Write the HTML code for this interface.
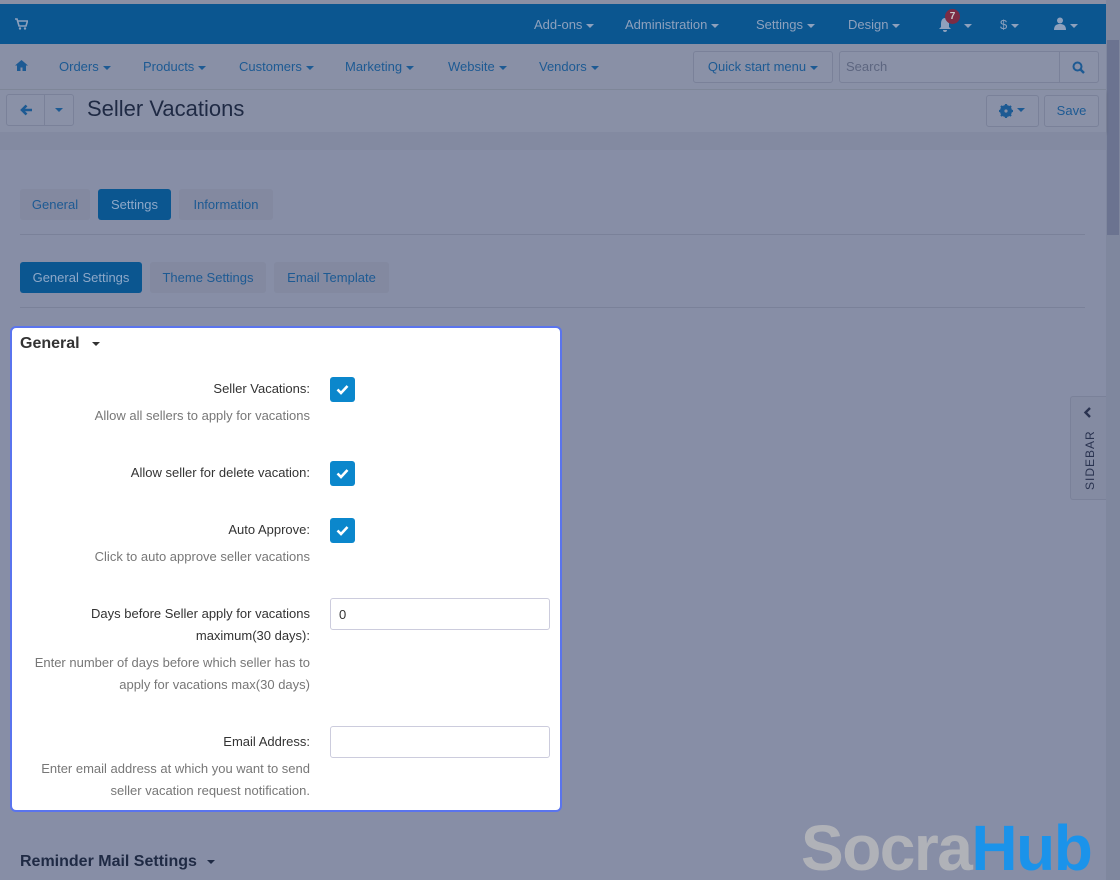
<!DOCTYPE html>
<html><head><meta charset="utf-8"><style>
*{box-sizing:border-box;margin:0;padding:0}
html,body{width:1120px;height:880px;overflow:hidden}
body{background:#878ea6;font-family:"Liberation Sans","DejaVu Sans",sans-serif;font-size:13px;color:#1f2a44;position:relative}
.top{position:absolute;left:0;top:4px;width:1106px;height:40px;background:#0b5690;color:#8ea1bd}
.top span{position:absolute;top:13px;font-size:13px}
.car{display:inline-block;width:0;height:0;border-left:4px solid transparent;border-right:4px solid transparent;border-top:4px solid currentColor;vertical-align:middle;margin-left:4px}
.nav2{position:absolute;left:0;top:44px;width:1106px;height:46px;background:#8990a6;border-bottom:1px solid #7f8799}
.nav2 span{position:absolute;top:15px;color:#1d5a93;font-size:13px}
.btn{position:absolute;border:1px solid #7a8199;border-radius:3px;background:#8a91a7}
.title{position:absolute;left:0;top:90px;width:1106px;height:42px;background:#8990a6;box-shadow:0 2px 3px rgba(0,0,0,.12)}
.tab{position:absolute;height:31px;border-radius:3px;background:#8389a0;color:#1d5a93;font-size:13px;text-align:center;line-height:31px}
.tab.a{background:#0b5690;color:#8ea8c8}
.hr{position:absolute;left:20px;width:1065px;height:1px;background:#7a8199}
.panel{position:absolute;left:10px;top:326px;width:552px;height:486px;background:#fff;border:2px solid #5a74ee;border-radius:6px}
.lbl{position:absolute;right:250px;text-align:right;color:#333;font-size:13px;line-height:22px;white-space:nowrap}
.hint{position:absolute;right:250px;text-align:right;color:#777;font-size:13px;line-height:22px;white-space:nowrap}
.cb{position:absolute;left:318px;width:25px;height:25px;background:#0b87cc;border-radius:3px}
.cb svg{position:absolute;left:6px;top:7px}
.inp{position:absolute;left:318px;width:220px;height:32px;border:1px solid #ccd;border-radius:3px;padding:8px;font-size:13px;color:#333}
</style></head><body>
<div style="position:absolute;left:0;top:0;width:1120px;height:4px;background:#8b90a4"></div>
<div style="position:absolute;left:1106px;top:0;width:14px;height:880px;background:#7f879e"></div>
<div style="position:absolute;left:1107px;top:40px;width:12px;height:195px;background:#6b7390"></div>
<div class="top">
<svg style="position:absolute;left:15px;top:14px" width="13" height="12" viewBox="0 0 13 12"><path d="M0 1h2l2 7h7l1.5-5H3" fill="none" stroke="#8ea1bd" stroke-width="1.6"/><circle cx="5" cy="10.5" r="1.2" fill="#8ea1bd"/><circle cx="10" cy="10.5" r="1.2" fill="#8ea1bd"/></svg>
<span style="left:534px">Add-ons<i class="car"></i></span>
<span style="left:625px">Administration<i class="car"></i></span>
<span style="left:756px">Settings<i class="car"></i></span>
<span style="left:848px">Design<i class="car"></i></span>
<svg style="position:absolute;left:938px;top:13px" width="14" height="15" viewBox="0 0 14 15"><path d="M7 1C4 1 3 4 3 7v3L1 12h12l-2-2V7c0-3-1-6-4-6zM5 13a2 2 0 004 0z" fill="#8ea1bd"/></svg>
<div style="position:absolute;left:945px;top:5px;width:15px;height:15px;border-radius:50%;background:#7b2c44;color:#ccc;font-size:10px;text-align:center;line-height:15px;font-weight:bold">7</div>
<span style="left:960px;top:13px"><i class="car"></i></span>
<span style="left:1000px">$<i class="car"></i></span>
<svg style="position:absolute;left:1054px;top:13px" width="12" height="13" viewBox="0 0 12 13"><circle cx="6" cy="3.5" r="3" fill="#8ea1bd"/><path d="M0 13c0-5 3-6 6-6s6 1 6 6z" fill="#8ea1bd"/></svg>
<span style="left:1066px"><i class="car"></i></span>
</div>
<div class="nav2">
<svg style="position:absolute;left:15px;top:16px" width="13" height="11" viewBox="0 0 13 11"><path d="M6.5 0L0 5.5h2V11h3.5V7.5h2V11H11V5.5h2z" fill="#1d5a93"/></svg>
<span style="left:59px">Orders<i class="car"></i></span>
<span style="left:143px">Products<i class="car"></i></span>
<span style="left:239px">Customers<i class="car"></i></span>
<span style="left:345px">Marketing<i class="car"></i></span>
<span style="left:448px">Website<i class="car"></i></span>
<span style="left:539px">Vendors<i class="car"></i></span>
<div class="btn" style="left:693px;top:7px;width:140px;height:32px;color:#1d5a93;text-align:center;line-height:30px">Quick start menu<i class="car"></i></div>
<div class="btn" style="left:839px;top:7px;width:260px;height:32px;color:#5d6680;padding-left:6px;line-height:30px">Search</div>
<div style="position:absolute;left:1059px;top:8px;width:1px;height:30px;background:#7a8199"></div>
<svg style="position:absolute;left:1072px;top:17px" width="13" height="13" viewBox="0 0 13 13"><circle cx="5.5" cy="5.5" r="4" fill="none" stroke="#1d5a93" stroke-width="2"/><path d="M8.5 8.5l3.5 3.5" stroke="#1d5a93" stroke-width="2.4"/></svg>
</div>
<div class="title">
<div class="btn" style="left:6px;top:4px;width:68px;height:32px"></div>
<div style="position:absolute;left:44px;top:5px;width:1px;height:30px;background:#7a8199"></div>
<svg style="position:absolute;left:20px;top:14px" width="13" height="12" viewBox="0 0 13 12"><path d="M12 6H3M6.5 1.5L2 6l4.5 4.5" fill="none" stroke="#1d5a93" stroke-width="2.6"/></svg>
<i class="car" style="position:absolute;left:51px;top:18px;color:#1d5a93"></i>
<div style="position:absolute;left:87px;top:6px;font-size:22px;color:#1f2a44">Seller Vacations</div>
<div class="btn" style="left:986px;top:5px;width:53px;height:32px"></div>
<svg style="position:absolute;left:999px;top:14px" width="14" height="14" viewBox="0 0 14 14"><circle cx="7" cy="7" r="4.5" fill="none" stroke="#1d5a93" stroke-width="3"/><path d="M7 0v14M0 7h14M2 2l10 10M12 2L2 12" stroke="#1d5a93" stroke-width="2.2"/><circle cx="7" cy="7" r="1.6" fill="#8990a6"/></svg>
<i class="car" style="position:absolute;left:1013px;top:18px;color:#1d5a93"></i>
<div class="btn" style="left:1044px;top:5px;width:55px;height:32px;color:#1d5a93;text-align:center;line-height:30px">Save</div>
</div>
<div style="position:absolute;left:0;top:132px;width:1106px;height:18px;background:#838aa1"></div>
<div class="tab" style="left:20px;top:189px;width:70px">General</div>
<div class="tab a" style="left:98px;top:189px;width:73px">Settings</div>
<div class="tab" style="left:179px;top:189px;width:94px">Information</div>
<div class="hr" style="top:234px"></div>
<div class="tab a" style="left:20px;top:262px;width:122px">General Settings</div>
<div class="tab" style="left:150px;top:262px;width:116px">Theme Settings</div>
<div class="tab" style="left:274px;top:262px;width:115px">Email Template</div>
<div class="hr" style="top:307px"></div>
<div class="panel">
<div style="position:absolute;left:8px;top:7px;font-size:16px;font-weight:bold;color:#333">General <i class="car" style="margin-left:8px"></i></div>
<div class="lbl" style="top:50px">Seller Vacations:</div>
<div class="cb" style="top:49px"><svg width="13" height="11" viewBox="0 0 13 11"><path d="M1.5 5.5l3.5 3.5 6.5-7" fill="none" stroke="#fff" stroke-width="2.6"/></svg></div>
<div class="hint" style="top:77px">Allow all sellers to apply for vacations</div>
<div class="lbl" style="top:134px">Allow seller for delete vacation:</div>
<div class="cb" style="top:133px"><svg width="13" height="11" viewBox="0 0 13 11"><path d="M1.5 5.5l3.5 3.5 6.5-7" fill="none" stroke="#fff" stroke-width="2.6"/></svg></div>
<div class="lbl" style="top:191px">Auto Approve:</div>
<div class="cb" style="top:190px"><svg width="13" height="11" viewBox="0 0 13 11"><path d="M1.5 5.5l3.5 3.5 6.5-7" fill="none" stroke="#fff" stroke-width="2.6"/></svg></div>
<div class="hint" style="top:218px">Click to auto approve seller vacations</div>
<div class="lbl" style="top:275px">Days before Seller apply for vacations<br>maximum(30 days):</div>
<div class="inp" style="top:270px">0</div>
<div class="hint" style="top:324px">Enter number of days before which seller has to<br>apply for vacations max(30 days)</div>
<div class="lbl" style="top:403px">Email Address:</div>
<div class="inp" style="top:398px"></div>
<div class="hint" style="top:430px">Enter email address at which you want to send<br>seller vacation request notification.</div>
</div>
<div style="position:absolute;left:20px;top:853px;font-size:16px;font-weight:bold;color:#1f2a44">Reminder Mail Settings <i class="car" style="margin-left:6px"></i></div>
<div style="position:absolute;left:1070px;top:396px;width:36px;height:104px;background:#848ba2;border:1px solid #7a8199;border-right:none;border-radius:3px 0 0 3px"></div>
<svg style="position:absolute;left:1083px;top:407px" width="9" height="11" viewBox="0 0 9 11"><path d="M7 1L2.5 5.5 7 10" fill="none" stroke="#2a3350" stroke-width="2.4"/></svg>
<div style="position:absolute;left:1083px;top:490px;transform:rotate(-90deg);transform-origin:0 0;font-size:12px;letter-spacing:1px;color:#2a3350;white-space:nowrap">SIDEBAR</div>
<div style="position:absolute;left:801px;top:812px;font-size:64px;font-weight:bold;letter-spacing:-1.5px;line-height:72px;white-space:nowrap"><span style="color:#b0b2b8">Socra</span><span style="color:#1b93ea">Hub</span></div>
</body></html>
